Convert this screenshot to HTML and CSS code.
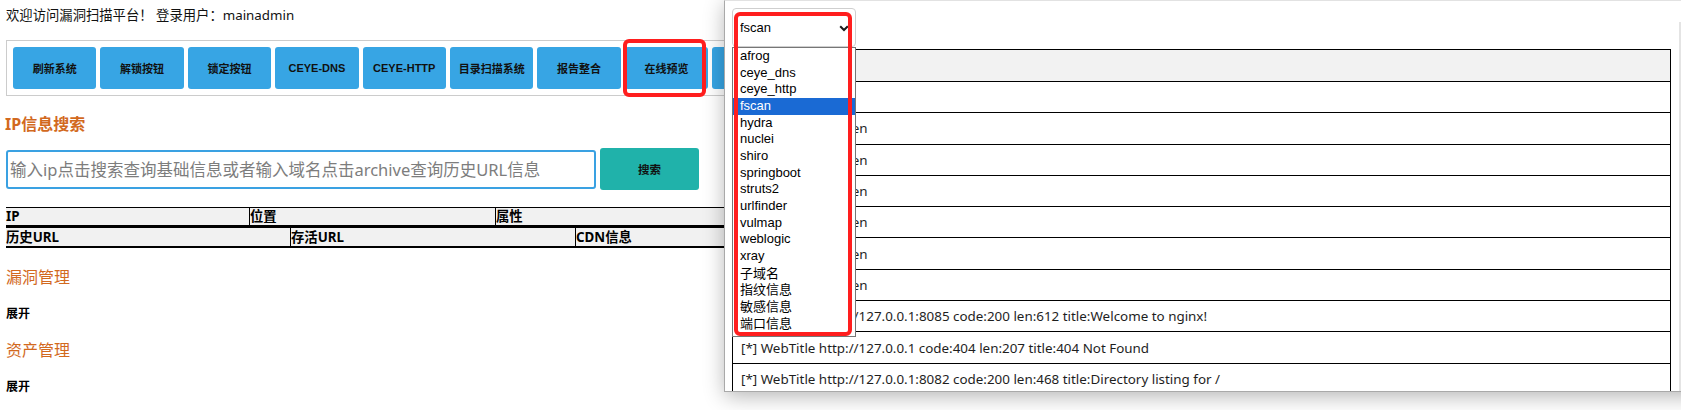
FILE: index.html
```html
<!DOCTYPE html>
<html lang="zh-CN">
<head>
<meta charset="utf-8">
<title>漏洞扫描平台</title>
<link rel="stylesheet" href="styles.css">
</head>
<body>
<div class="welcome">欢迎访问漏洞扫描平台！ 登录用户：mainadmin</div>

<div class="toolbar">
  <button class="btn">刷新系统</button>
  <button class="btn">解锁按钮</button>
  <button class="btn">锁定按钮</button>
  <button class="btn">CEYE-DNS</button>
  <button class="btn">CEYE-HTTP</button>
  <button class="btn">目录扫描系统</button>
  <button class="btn">报告整合</button>
  <button class="btn">在线预览</button>
  <button class="btn">漏洞扫描</button>
  <button class="btn">退出登录</button>
</div>

<h3 class="sec-title strong">IP信息搜索</h3>
<div class="search-row">
  <input class="search-input" type="text" placeholder="输入ip点击搜索查询基础信息或者输入域名点击archive查询历史URL信息">
  <button class="search-btn">搜索</button>
</div>

<table class="info-table t1">
  <tr><th>IP</th><th>位置</th><th>属性</th></tr>
</table>
<table class="info-table t2">
  <tr><th>历史URL</th><th>存活URL</th><th>CDN信息</th></tr>
</table>

<h3 class="sec-title">漏洞管理</h3>
<div class="toggle">展开</div>
<h3 class="sec-title">资产管理</h3>
<div class="toggle">展开</div>

<div class="mark mark-btn"></div>

<div class="popup">
  <div class="popup-body">
    <div class="select-wrap">
      <select class="tool-select"><option>fscan</option></select>
      <svg class="chev" width="10" height="7" viewBox="0 0 10 7"><path d="M1.2 1.2 L5 5 L8.8 1.2" fill="none" stroke="#1a1a1a" stroke-width="2"/></svg>
    </div>
    <table class="result-table">
      <tr class="head"><th>fscan</th></tr>
      <tr><td>start infoscan</td></tr>
      <tr><td>127.0.0.1:3306 open</td></tr>
      <tr><td>127.0.0.1:6379 open</td></tr>
      <tr><td>127.0.0.1:8080 open</td></tr>
      <tr><td>127.0.0.1:8082 open</td></tr>
      <tr><td>127.0.0.1:8085 open</td></tr>
      <tr><td>127.0.0.1:8088 open</td></tr>
      <tr><td>[*] WebTitle http://127.0.0.1:8085 code:200 len:612 title:Welcome to nginx!</td></tr>
      <tr><td>[*] WebTitle http://127.0.0.1 code:404 len:207 title:404 Not Found</td></tr>
      <tr><td>[*] WebTitle http://127.0.0.1:8082 code:200 len:468 title:Directory listing for /</td></tr>
      <tr><td>[*] WebTitle http://127.0.0.1:8080 code:200 len:1024 title:Index</td></tr>
    </table>
  </div>
  <div class="scroll-edge"></div>
  <ul class="listbox">
    <li>afrog</li>
    <li>ceye_dns</li>
    <li>ceye_http</li>
    <li class="sel">fscan</li>
    <li>hydra</li>
    <li>nuclei</li>
    <li>shiro</li>
    <li>springboot</li>
    <li>struts2</li>
    <li>urlfinder</li>
    <li>vulmap</li>
    <li>weblogic</li>
    <li>xray</li>
    <li class="cjk">子域名</li>
    <li class="cjk">指纹信息</li>
    <li class="cjk">敏感信息</li>
    <li class="cjk">端口信息</li>
    <li class="cjk">目录信息</li>
  </ul>
</div>

<div class="mark mark-list"></div>
</body>
</html>
```

FILE: styles.css
```css
html, body {
  margin: 0;
  padding: 0;
  overflow: hidden;
  background: #fff;
}
body {
  position: relative;
  width: 1681px;
  height: 410px;
  font-family: "Noto Sans", "Noto Sans CJK SC", sans-serif;
  color: #000;
}

.welcome {
  padding: 6px 6px 0;
  font-size: 13.33px;
  line-height: 19px;
  color: #111;
}

.toolbar {
  margin: 15px 6px 0;
  border: 1px solid #cccccc;
  padding: 6px;
  display: flex;
  gap: 4px;
  overflow: hidden;
}
.btn {
  flex: 0 0 83.4px;
  height: 42px;
  border: 0;
  border-radius: 3px;
  background: #37a5e4;
  color: #111;
  font: bold 11px "Liberation Sans", "Noto Sans CJK SC", sans-serif;
  padding: 0;
}

.sec-title {
  margin: 19px 0 0 6px;
  font-size: 16px;
  line-height: 20px;
  font-weight: normal;
  color: #d2691e;
}
.sec-title.strong {
  margin: 18px 0 0 5px;
  font-weight: bold;
}

.search-row {
  margin: 14px 0 0 6px;
  display: flex;
  align-items: center;
  gap: 4px;
  height: 42px;
}
.search-input {
  box-sizing: border-box;
  width: 590px;
  height: 39px;
  border: 2px solid #3aa1e2;
  border-radius: 3px;
  padding: 0 0 0 2px;
  font: 16.5px "Noto Sans", "Noto Sans CJK SC", sans-serif;
  outline: none;
}
.search-input::placeholder {
  color: #7d7d7d;
}
.search-btn {
  width: 99px;
  height: 42px;
  border: 0;
  border-radius: 3px;
  background: #20b2aa;
  color: #111;
  font: bold 11.5px "Liberation Sans", "Noto Sans CJK SC", sans-serif;
  padding: 0;
}

.info-table {
  border-collapse: collapse;
  table-layout: fixed;
  margin-left: 6px;
  font-size: 13.33px;
}
.info-table th {
  background: #f1f1f1;
  text-align: left;
  font-weight: bold;
  padding: 0;
  line-height: 17px;
  white-space: nowrap;
}
.info-table th + th {
  border-left: 1px solid #000;
}
.t1 {
  margin-top: 17px;
  width: 733px;
  border-top: 1px solid #000;
}
.t1 th {
  height: 17px;
  border-bottom: 3px solid #000;
}
.t1 th:nth-child(1) { width: 243px; }
.t1 th:nth-child(2) { width: 245px; }
.t2 {
  width: 852px;
}
.t2 th {
  height: 18px;
  border-bottom: 2px solid #000;
}
.t2 th:nth-child(1) { width: 284px; }
.t2 th:nth-child(2) { width: 284px; }

.toggle {
  margin: 20px 0 0 6px;
  font-size: 12px;
  line-height: 14px;
  font-weight: bold;
}

/* annotation boxes */
.mark {
  position: absolute;
  box-sizing: border-box;
  border: 4px solid #ff1e1e;
  border-radius: 6px;
  z-index: 10;
  pointer-events: none;
}
.mark-btn {
  left: 623px;
  top: 39px;
  width: 83px;
  height: 58px;
}
.mark-list {
  left: 734px;
  top: 12px;
  width: 118px;
  height: 324px;
}

/* popup layer */
.popup {
  position: absolute;
  left: 724px;
  top: 0;
  width: 1000px;
  height: 390px;
  background: #fff;
  border: 1px solid #a9a9a9;
  border-top-color: #e2e2e2;
  box-shadow: 1px 4px 20px rgba(0, 0, 0, 0.3);
  overflow: hidden;
  z-index: 5;
}
.popup-body {
  padding: 7px 0 0 7px;
}
.select-wrap {
  position: relative;
  width: 124px;
  height: 39px;
}
.tool-select {
  -webkit-appearance: none;
  appearance: none;
  box-sizing: border-box;
  width: 124px;
  height: 39px;
  border: 1px solid #cfcfcf;
  border-radius: 4px;
  background: #fff;
  padding: 0 0 0 7px;
  font: 13px "Liberation Sans", sans-serif;
  color: #000;
}
.chev {
  position: absolute;
  left: 107px;
  top: 17px;
}
.result-table {
  margin-top: 2px;
  width: 939px;
  border-collapse: collapse;
  font: 13.4px "Noto Sans", "Noto Sans CJK SC", sans-serif;
  color: #1e1e1e;
}
.result-table th,
.result-table td {
  border: 1px solid #000;
  padding: 0 7px 0 8px;
  text-align: left;
  white-space: nowrap;
}
.result-table th {
  background: #f2f2f2;
  font-weight: normal;
}
.result-table tr { height: 31.3px; }
.result-table tr.head { height: 32px; }

.scroll-edge {
  position: absolute;
  left: 954px;
  top: 21px;
  bottom: 0;
  width: 2px;
  background: #e4e4e4;
}

.listbox {
  position: absolute;
  left: 7px;
  top: 46px;
  box-sizing: border-box;
  width: 124px;
  height: 290px;
  margin: 0;
  padding: 0;
  list-style: none;
  background: #fff;
  border: 1px solid #767676;
  overflow: hidden;
  font: 13px "Liberation Sans", "Noto Sans CJK SC", sans-serif;
  color: #000;
  z-index: 2;
}
.listbox li {
  box-sizing: border-box;
  height: 16.67px;
  line-height: 16.67px;
  padding-left: 7px;
  white-space: nowrap;
}
.listbox li.cjk {
  padding-top: 2px;
  line-height: 14.67px;
}
.listbox li.sel {
  background: #1a6ad4;
  color: #fff;
}
```
